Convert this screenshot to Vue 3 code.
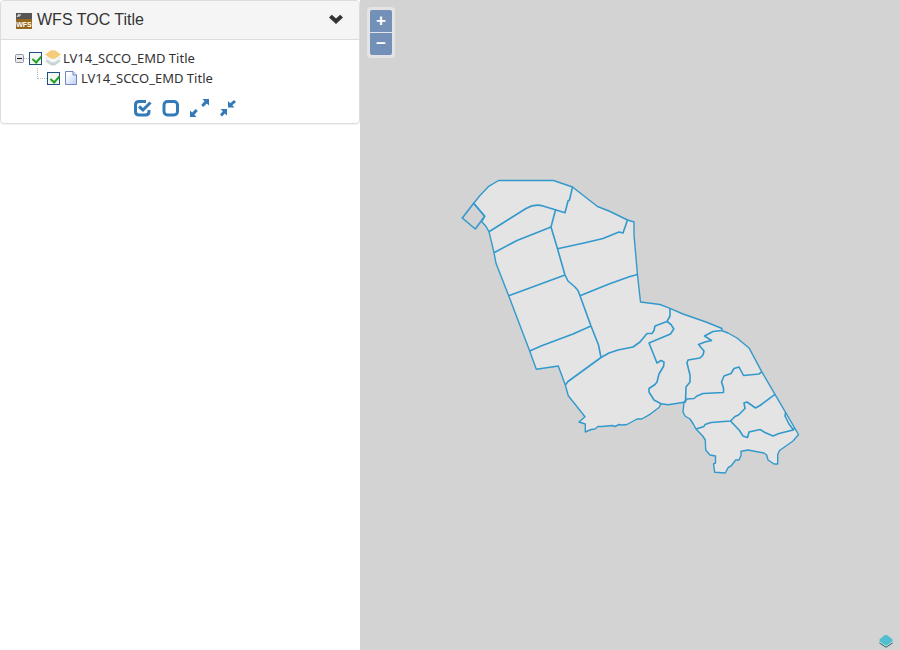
<script setup>
import { ref } from 'vue'

const open = ref(true)
const rootChecked = ref(true)
const leafChecked = ref(true)

function setAll(value) {
  rootChecked.value = value
  leafChecked.value = value
}

const outline =
  'M498.5 180.5H553.5L572.5 187L597.5 206.5L609 211L627.5 220L634 222V235L637.5 275L640.5 302L660 304.5L670 308.3L683 314L706 322L722 328.5L721.5 330.5L728 333L737 338L749.3 348.3L761.7 371.7L775 394.3L798.5 434.5L793 441L779.5 450.5L777.7 454.5V464H774L768 460L766.7 455L764 453L748 450L741 451.3V455.5L739 460H735.7L731 466L728.3 467.3L725.3 473L714.7 472.3L713.5 464L715.5 463V456L710 455L705.7 450L705.3 440L702.7 436L696 429L693.3 424L690 419L685 416L683 412L684 402.3L668.3 404.7L661 403.7L659 407.5L650 414.3L641.7 419H637L627 424.5L622 425L619 424.5L615 426.5L612 425.5L607 426L602 426.5L598 426.5L595 429L591 429.5L585.3 432V424L579 422L585 416.7L568.3 395.7L565.3 385L558.3 366L536.3 369.3L529.7 351L508.7 295.7L496 263.3L494 252.7L489 231.7L485.7 226L481.7 221.7L484.7 216.3L473.7 203.3L480 195.5L488.3 186.7Z'

const borders = [
  'M473.7 203.3L462.3 218L475.3 229L484.7 216.3Z',
  'M489 231.7L526 208.5Q535 203.5 543 206L565 212.7L568 201L569.5 200L572.5 187',
  'M555.5 210L551 227L557.5 248.7L565 275L568 281L575 287L578 290.5L580 295.7L591 326L598.5 345L601 357.5',
  'M494 252.7L517 240.5L551 227',
  'M557.5 248.7L584 243L603 238.5L619 232L623 233L627.5 220',
  'M508.7 295.7L565 275',
  'M580 295.7L609 284L630 276.5L637.5 274.5',
  'M529.7 351L541 346L573 334L591 326',
  'M565.3 385L568 381.5L601 357.5L609 353L618 350L633 347L640 342L647 333.5H652L654 330.5L655 326L667 321.5L670 316V308.3',
  'M667 321.5L671 324.5L673.8 329L670.5 334L649 343L657 363L661 360.5L664 362L663.7 366L659 374L657 382L655 384.5L649 388.5V392L654 400L661 403.7',
  'M721.5 330.5L713 331.5L704.5 336L711.5 340.5L705 342L698.5 344.5L704 351L703 355L700 358L688 360L687 363L690 375V382L686 387L685.5 402L684 402.3',
  'M684 402.3L687 399L694 398.5L697 396L703 393.5L713 393L723.5 392.5V388L721.5 382L724 376L731 373.5L734 368.5L739 367L743.5 375.5L759 374L762 371.7',
  'M696 429L704 426.5L705 424.5L711 422.5L730.5 421L735 416.5L738.5 415L745 408.5L744 403L747 402L755.5 408L760 405.5L775 394.3',
  'M730.5 421L739.5 430.5L743 436L747.5 437.5L749 432L760 429.5L765 432.5L773 436L779 433.5L793 430',
  'M785.5 412.5L785 416L789 424L793.5 430L794.5 428'
]
</script>

<template>
  <div class="layout">
    <aside class="sidebar">
      <section class="panel">
        <header class="panel-header">
          <svg class="wfs-icon" viewBox="0 0 16 16" aria-hidden="true">
            <rect width="16" height="7" fill="#555" />
            <rect y="6" width="16" height="10" fill="#94671b" />
            <path d="M1 4L3 1M3 4V2H5" fill="none" stroke="#eee" />
            <text x="8" y="14" text-anchor="middle" class="wfs-text">WFS</text>
          </svg>
          <h1>WFS TOC Title</h1>
          <button class="plain collapse" aria-label="Toggle panel" @click="open = !open">
            <svg width="16" height="14" viewBox="0 0 16 14">
              <path d="M1 4.5L3.8 1.7L8 5.6L12.2 1.7L15 4.5L8 11Z" fill="#333" />
            </svg>
          </button>
        </header>
        <div v-if="open" class="panel-body">
          <ul class="tree">
            <li>
              <div class="row">
                <button class="plain expander" aria-label="Collapse group">
                  <svg width="9" height="9" viewBox="0 0 9 9">
                    <rect x=".5" y=".5" width="8" height="8" rx="1" fill="#e8eaee" stroke="#9097a0" />
                    <path d="M2 4.5H7" stroke="#111" />
                  </svg>
                </button>
                <span class="dots"></span>
                <input id="group" v-model="rootChecked" type="checkbox" />
                <svg class="layers" width="16" height="16" viewBox="0 0 16 16" aria-hidden="true">
                  <path d="M0 11L8 7L16 11L10 15.5H6Z" fill="#c9d5d2" />
                  <path d="M.3 8L8 4L15.7 8L10 12.3H6Z" fill="#f5faf9" stroke="#d2dfdd" stroke-width=".6" />
                  <path d="M0 4.5L6 .3H10L16 4.5L10 8.7H6Z" fill="#f6cb7c" />
                </svg>
                <label for="group">LV14_SCCO_EMD Title</label>
              </div>
              <ul>
                <li class="row child">
                  <span class="elbow"></span>
                  <input id="leaf" v-model="leafChecked" type="checkbox" />
                  <svg class="page" width="12" height="14" viewBox="0 0 12 14" aria-hidden="true">
                    <defs>
                      <linearGradient id="sheet" x2="1" y2="1">
                        <stop offset=".2" stop-color="#fff" />
                        <stop offset="1" stop-color="#b9cff5" />
                      </linearGradient>
                    </defs>
                    <path d="M.5.5H8L11.5 4V13.5H.5Z" fill="url(#sheet)" stroke="#7286bd" />
                    <path d="M8 .5V4H11.5" fill="#d9e5fb" stroke="#7286bd" />
                  </svg>
                  <label for="leaf">LV14_SCCO_EMD Title</label>
                </li>
              </ul>
            </li>
          </ul>
          <div class="tools">
            <button class="plain" aria-label="Check all" @click="setAll(true)">
              <svg width="18" height="18" viewBox="0 0 18 18">
                <path d="M12 2.5H5Q1.5 2.5 1.5 6V12.5Q1.5 16 5 16H11.5Q15 16 15 12.5V11" fill="none" stroke="#337ab7" stroke-width="3" />
                <path d="M5 7.5L9 11L16.5 3.5" fill="none" stroke="#337ab7" stroke-width="3" />
              </svg>
            </button>
            <button class="plain" aria-label="Uncheck all" @click="setAll(false)">
              <svg width="18" height="18" viewBox="0 0 18 18">
                <rect x="2" y="2.5" width="13.5" height="13.5" rx="3.5" fill="none" stroke="#337ab7" stroke-width="3" />
              </svg>
            </button>
            <button class="plain" aria-label="Expand all">
              <svg width="20" height="18" viewBox="0 0 20 18">
                <path d="M12.5 0H19V6.5L16.9 4.5L13.2 7.9L11.2 5.9L14.6 2.2ZM0 11.5L2.1 13.5L5.8 10L7.8 12L4.4 15.8L6.5 18H0Z" fill="#337ab7" />
              </svg>
            </button>
            <button class="plain" aria-label="Collapse all">
              <svg width="18" height="18" viewBox="0 0 18 18">
                <path d="M14 1L16 3L12.3 6.3L14.5 8.5H8V2L10.2 4.2ZM.5 10H7V16.5L4.9 14.6L2 17.5L0 15.5L2.8 12.3Z" fill="#337ab7" />
              </svg>
            </button>
          </div>
        </div>
      </section>
    </aside>

    <main class="map">
      <svg class="features" viewBox="360 0 540 650" role="img" aria-label="District boundaries">
        <path :d="outline" class="area" />
        <path v-for="(d, i) in borders" :key="i" :d="d" class="border" />
      </svg>
      <div class="zoom">
        <button aria-label="Zoom in">+</button>
        <button aria-label="Zoom out">−</button>
      </div>
      <svg class="brand" width="14" height="14" viewBox="0 0 14 14" aria-hidden="true">
        <path d="M.5 8L7 12.5L13.5 8V9.5L7 13.8L.5 9.5Z" fill="#37636f" />
        <path d="M.5 7L7 11.5L13.5 7V8.3L7 12.5L.5 8.3Z" fill="#e4f4f6" />
        <path d="M.5 5.5L5.5 1.3Q7 .5 8.5 1.3L13.5 5.5V7.5L8.5 11Q7 12 5.5 11L.5 7.5Z" fill="#51bfd0" />
      </svg>
    </main>
  </div>
</template>

<style>
body {
  margin: 0;
}
</style>

<style scoped>
* {
  box-sizing: border-box;
}
.layout {
  display: flex;
  min-height: 100vh;
  font-family: "Liberation Sans", Arial, sans-serif;
  color: #333;
}
.sidebar {
  flex: 0 0 40%;
  background: #fff;
}
.panel {
  border: 1px solid #ddd;
  border-radius: 4px;
  box-shadow: 0 1px 1px rgba(0, 0, 0, 0.05);
}
.panel-header {
  display: flex;
  align-items: center;
  height: 39px;
  padding: 0 15px;
  background: #f5f5f5;
  border-bottom: 1px solid #ddd;
  border-radius: 3px 3px 0 0;
}
.wfs-icon {
  width: 16px;
  height: 16px;
  margin-top: 2px;
}
.wfs-text {
  font: bold 7px "Liberation Sans", sans-serif;
  fill: #fff;
}
h1 {
  flex: 1;
  margin: 0 0 0 5px;
  font-size: 16px;
  font-weight: 400;
  line-height: 18px;
}
.plain {
  display: block;
  padding: 0;
  border: 0;
  background: none;
  cursor: pointer;
}
.plain svg,
.row svg {
  display: block;
}
.panel-body {
  padding: 8px 14px 6px;
}
ul {
  margin: 0;
  padding: 0;
  list-style: none;
}
.row {
  display: flex;
  align-items: center;
  height: 20px;
  font: 13px/20px "Noto Sans", Verdana, sans-serif;
}
.dots {
  width: 5px;
  border-top: 1px dotted #bbb;
}
.child {
  padding-left: 22px;
}
.elbow {
  align-self: flex-start;
  width: 10px;
  height: 11px;
  border-left: 1px dotted #bbb;
  border-bottom: 1px dotted #bbb;
}
input {
  appearance: none;
  width: 13px;
  height: 13px;
  margin: 0;
  border: 1px solid #1c5180;
  background: #f5f7f5;
}
input:checked::before {
  content: "";
  display: block;
  width: 4px;
  height: 7px;
  margin: 1px 0 0 4px;
  border: solid #21a121;
  border-width: 0 2px 2px 0;
  transform: rotate(42deg);
}
.layers {
  margin: 0 2px 0 3px;
}
.page {
  margin: 0 4px 0 5px;
}
.tools {
  display: flex;
  justify-content: center;
  gap: 10px;
  padding: 11px 0 0 11px;
}
.map {
  position: relative;
  flex: 1;
  display: flex;
  background: #d3d3d3;
}
.features {
  flex: 1;
  width: 100%;
  height: 100vh;
}
.area,
.border {
  stroke: #3399cc;
  stroke-linejoin: round;
}
.area {
  fill: rgba(255, 255, 255, 0.4);
  stroke-width: 1.4;
}
.border {
  fill: none;
  stroke-width: 1.6;
}
.zoom {
  position: absolute;
  top: 7px;
  left: 7px;
  display: grid;
  gap: 1px;
  padding: 3px;
  border-radius: 4px;
  background: rgba(255, 255, 255, 0.4);
}
.zoom button {
  width: 22px;
  height: 22px;
  padding: 0;
  border: 0;
  border-radius: 0 0 2px 2px;
  background: #7390b8;
  color: #fff;
  font: bold 17px/20px "Liberation Sans", Arial, sans-serif;
}
.zoom button:first-child {
  border-radius: 2px 2px 0 0;
}
.brand {
  position: absolute;
  right: 7px;
  bottom: 2px;
}
</style>
